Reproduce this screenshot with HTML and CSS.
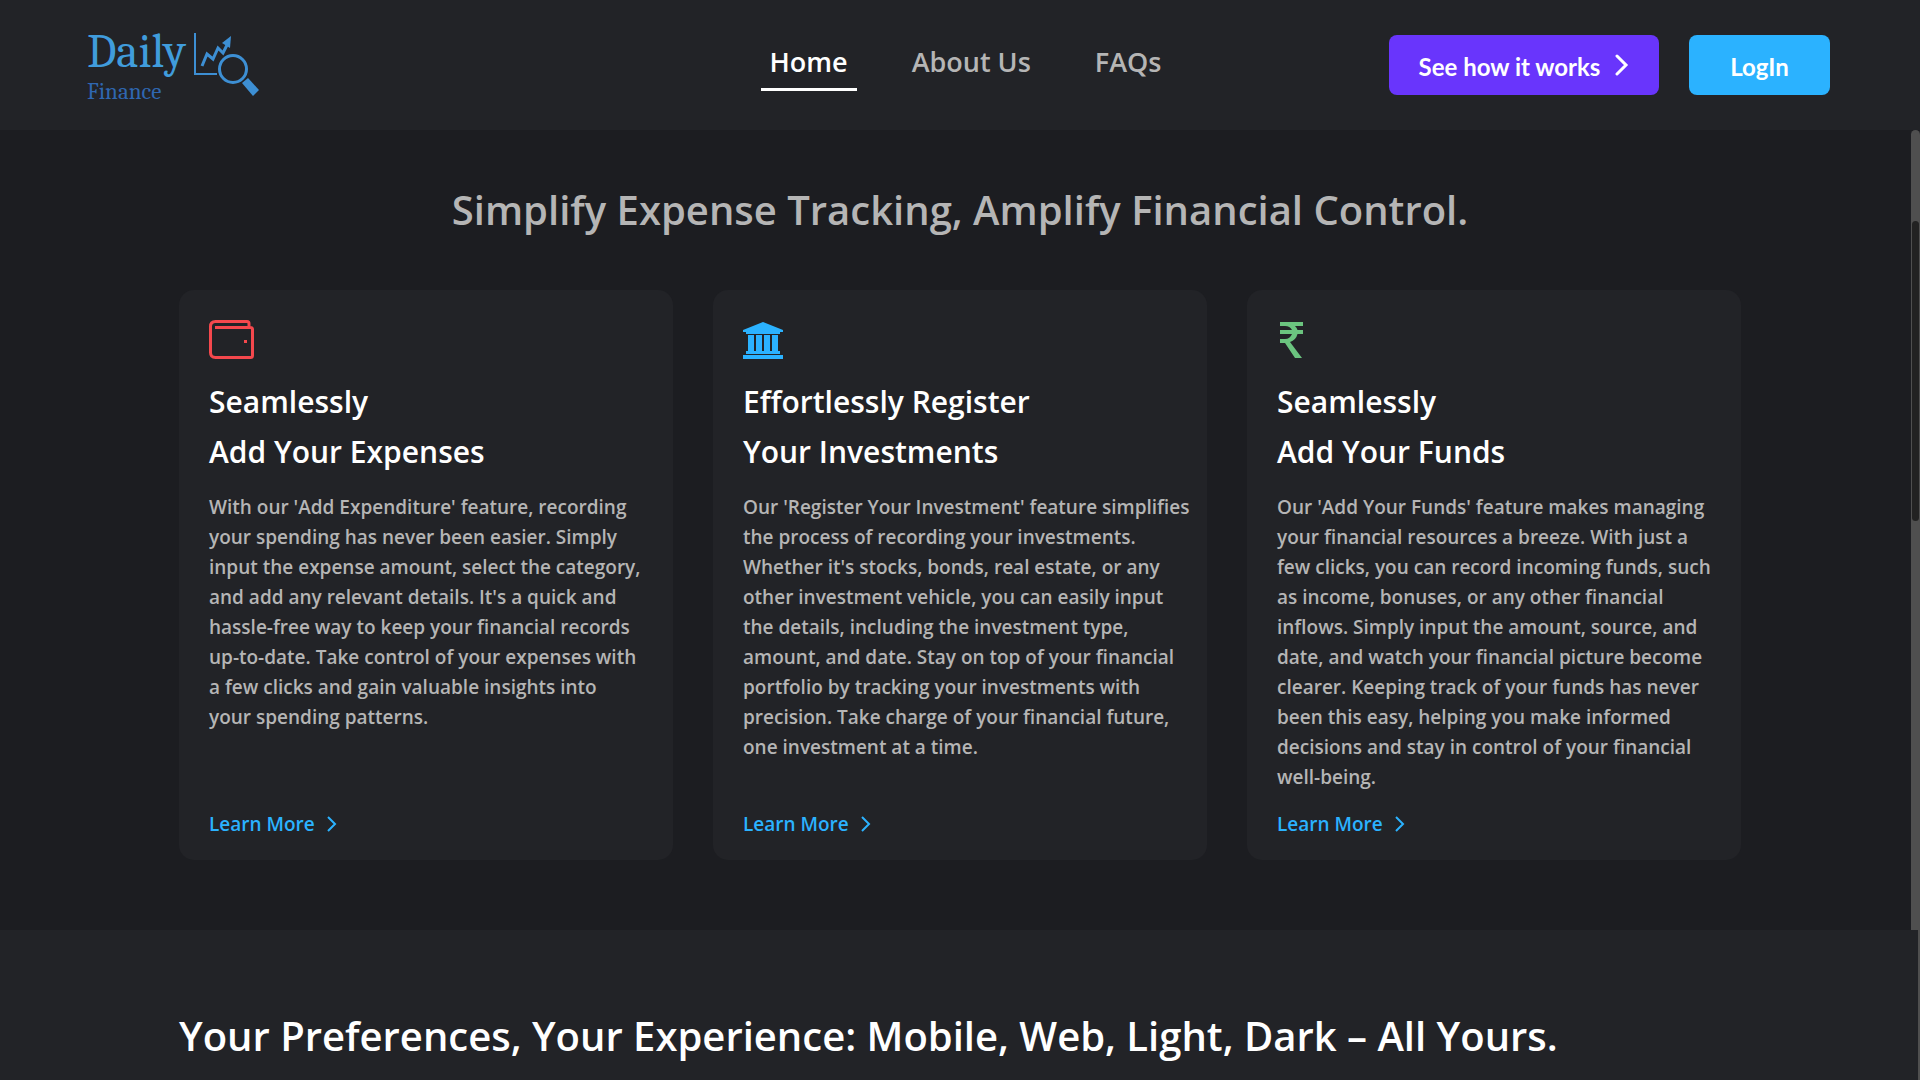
FILE: index.html
```html
<!DOCTYPE html>
<html lang="en">
<head>
<meta charset="utf-8">
<meta name="viewport" content="width=device-width, initial-scale=1">
<title>Daily Finance</title>
<link rel="stylesheet" href="styles.css">
</head>
<body>
<header class="header">
  <a class="logo" href="#">
    <span class="logo-text"><span class="logo-name">Daily</span><span class="logo-sub">Finance</span></span>
    <svg class="logo-mark" viewBox="0 0 68 66" aria-hidden="true">
      <path d="M2 1V42H24" fill="none" stroke="#3d8fd4" stroke-width="2"/>
      <path d="M9 34L14 22L20 27L25 16L30 21L35 11" fill="none" stroke="#3d8fd4" stroke-width="3"/>
      <path d="M38 4L29 11L37 16Z" fill="#3d8fd4"/>
      <circle cx="40" cy="37" r="13.500" fill="none" stroke="#3d8fd4" stroke-width="3"/>
      <path d="M49 51L55 46L66 58L60 64Z" fill="#3d8fd4"/>
    </svg>
  </a>
  <nav class="nav">
    <a class="nav-link nav-link-active" href="#">Home</a>
    <a class="nav-link" href="#about">About Us</a>
    <a class="nav-link" href="#faqs">FAQs</a>
  </nav>
  <div class="actions">
    <button class="button button-demo" type="button">See how it works
      <svg class="button-arrow" viewBox="0 0 14 22" aria-hidden="true"><path d="M2 2L11 11L2 20"/></svg>
    </button>
    <button class="button button-login" type="button">LogIn</button>
  </div>
</header>
<main>
  <section class="features">
    <h1 class="features-title">Simplify Expense Tracking, Amplify Financial Control.</h1>
    <div class="cards">
      <article class="card">
        <svg class="card-icon" viewBox="0 0 46 40" aria-hidden="true">
          <path d="M40 7V3.500Q40 1.500 38 1.500H6.500Q1.500 1.500 1.500 6.500V32.500Q1.500 37.500 6.500 37.500H41.500Q43.500 37.500 43.500 35.500V9.500Q43.500 7.500 41.500 7.500H6" fill="none" stroke="#f5484d" stroke-width="3"/>
          <rect x="35" y="20" width="3" height="3" fill="#f5484d"/>
        </svg>
        <h2 class="card-title">Seamlessly<br>Add Your Expenses</h2>
        <p class="card-text">With our 'Add Expenditure' feature, recording<br>your spending has never been easier. Simply<br>input the expense amount, select the category,<br>and add any relevant details. It's a quick and<br>hassle-free way to keep your financial records<br>up-to-date. Take control of your expenses with<br>a few clicks and gain valuable insights into<br>your spending patterns.</p>
        <a class="card-link" href="#expenses">Learn More <svg class="link-arrow" viewBox="0 0 10 16" aria-hidden="true"><path d="M1 1L8 8L1 15"/></svg></a>
      </article>
      <article class="card">
        <svg class="card-icon" viewBox="0 0 46 40" aria-hidden="true">
          <path d="M20 2L40 10V12H37V14H3V12H0V10ZM5 15H11V31H13V15H19V31H21V15H27V31H29V15H35V31H37V34H3V31H5ZM0 35H40V39H0Z" fill="#2bb2ff"/>
        </svg>
        <h2 class="card-title">Effortlessly Register<br>Your Investments</h2>
        <p class="card-text">Our 'Register Your Investment' feature simplifies<br>the process of recording your investments.<br>Whether it's stocks, bonds, real estate, or any<br>other investment vehicle, you can easily input<br>the details, including the investment type,<br>amount, and date. Stay on top of your financial<br>portfolio by tracking your investments with<br>precision. Take charge of your financial future,<br>one investment at a time.</p>
        <a class="card-link" href="#investments">Learn More <svg class="link-arrow" viewBox="0 0 10 16" aria-hidden="true"><path d="M1 1L8 8L1 15"/></svg></a>
      </article>
      <article class="card">
        <svg class="card-icon" viewBox="0 0 46 40" aria-hidden="true">
          <path d="M3 2H26V6H18Q20 8 20.500 10H26V14H20.500Q19 20 13 22L25 38H18L8 23H3V19H8Q13 19 15 14H3V10H15Q13 6 8 6H3Z" fill="#6bc47f"/>
        </svg>
        <h2 class="card-title">Seamlessly<br>Add Your Funds</h2>
        <p class="card-text">Our 'Add Your Funds' feature makes managing<br>your financial resources a breeze. With just a<br>few clicks, you can record incoming funds, such<br>as income, bonuses, or any other financial<br>inflows. Simply input the amount, source, and<br>date, and watch your financial picture become<br>clearer. Keeping track of your funds has never<br>been this easy, helping you make informed<br>decisions and stay in control of your financial<br>well-being.</p>
        <a class="card-link" href="#funds">Learn More <svg class="link-arrow" viewBox="0 0 10 16" aria-hidden="true"><path d="M1 1L8 8L1 15"/></svg></a>
      </article>
    </div>
    <div class="scroll-track"><div class="scroll-thumb"></div></div>
  </section>
  <section class="preferences">
    <h2 class="preferences-title">Your Preferences, Your Experience: Mobile, Web, Light, Dark – All Yours.</h2>
  </section>
</main>
</body>
</html>
```
FILE: styles.css
```css
* {
  box-sizing: border-box;
}

body {
  display: flex;
  flex-direction: column;
  min-height: 100vh;
  margin: 0;
  background: #222327;
  color: #fff;
  font-family: "Segoe UI", "Open Sans", "Noto Sans", sans-serif;
  font-weight: 600;
}

main {
  display: flex;
  flex: 1;
  flex-direction: column;
}

a {
  color: inherit;
  text-decoration: none;
}

.header {
  display: grid;
  grid-template-columns: 1fr auto 1fr;
  align-items: center;
  height: 130px;
  padding: 0 90px 0 87px;
  background: #222327;
}

.logo {
  display: flex;
  align-items: center;
  gap: 7px;
}

.logo-text {
  display: flex;
  flex-direction: column;
  font-family: Cambria, "Liberation Serif", serif;
  font-weight: 400;
}

.logo-name {
  color: #409cdc;
  font-size: 47px;
  line-height: 53px;
}

.logo-sub {
  color: #2f67b1;
  font-size: 23px;
  line-height: 26px;
}

.logo-mark {
  width: 68px;
  height: 66px;
}

.nav {
  display: flex;
  gap: 46px;
  margin: 0 0 6px 14px;
}

.nav-link {
  padding: 10px 9px 8px;
  border-bottom: 3px solid transparent;
  color: #b5b5b5;
  font-size: 27px;
  line-height: 36px;
}

.nav-link-active {
  border-color: #fff;
  color: #fff;
}

.actions {
  display: flex;
  justify-content: flex-end;
  gap: 30px;
}

.button {
  display: flex;
  align-items: center;
  justify-content: center;
  height: 60px;
  padding: 2px 0 0;
  border: 0;
  border-radius: 8px;
  color: #fff;
  font-family: Lato, sans-serif;
  font-size: 24px;
  font-weight: 700;
  cursor: pointer;
}

.button-demo {
  gap: 15px;
  width: 270px;
  background: #6935fc;
}

.button-login {
  width: 141px;
  background: #2bb2ff;
}

.button-arrow {
  width: 14px;
  height: 22px;
  margin-bottom: 2px;
}

.button-arrow path {
  fill: none;
  stroke: #fff;
  stroke-width: 3;
  stroke-linecap: round;
}

.features {
  position: relative;
  padding: 50px 179px 70px;
  background: #1c1d21;
}

.features-title {
  margin: 0 0 50px;
  color: #b5b5b5;
  font-size: 40px;
  font-weight: 600;
  line-height: 60px;
  text-align: center;
}

.cards {
  display: grid;
  grid-template-columns: repeat(3, 1fr);
  gap: 40px;
}

.card {
  display: flex;
  flex-direction: column;
  align-items: flex-start;
  padding: 30px 0 20px 30px;
  border-radius: 15px;
  background: #222327;
  white-space: nowrap;
}

.card-icon {
  width: 46px;
  height: 40px;
}

.card-title {
  margin: 17px 0 15px;
  font-size: 30px;
  font-weight: 600;
  line-height: 50px;
}

.card-text {
  margin: 0 0 16px;
  color: #b5b5b5;
  font-size: 19px;
  line-height: 30px;
}

.card-link {
  display: flex;
  align-items: center;
  gap: 12px;
  margin-top: auto;
  color: #2bb2ff;
  font-size: 19px;
  line-height: 32px;
}

.link-arrow {
  width: 10px;
  height: 16px;
}

.link-arrow path {
  fill: none;
  stroke: currentColor;
  stroke-width: 2;
}

.scroll-track {
  position: absolute;
  top: 0;
  right: 0;
  bottom: 0;
  width: 9px;
  border-radius: 5px 5px 0 0;
  background: #4f4f4f;
}

.scroll-thumb {
  height: 300px;
  margin: 91px 1px 0;
  border-radius: 4px;
  background: #222;
}

.preferences {
  flex: 1;
  padding: 76px 179px 0;
  border-right: 2px solid #4f4f4f;
}

.preferences-title {
  margin: 0;
  font-size: 40px;
  font-weight: 600;
  line-height: 60px;
  white-space: nowrap;
}
```
